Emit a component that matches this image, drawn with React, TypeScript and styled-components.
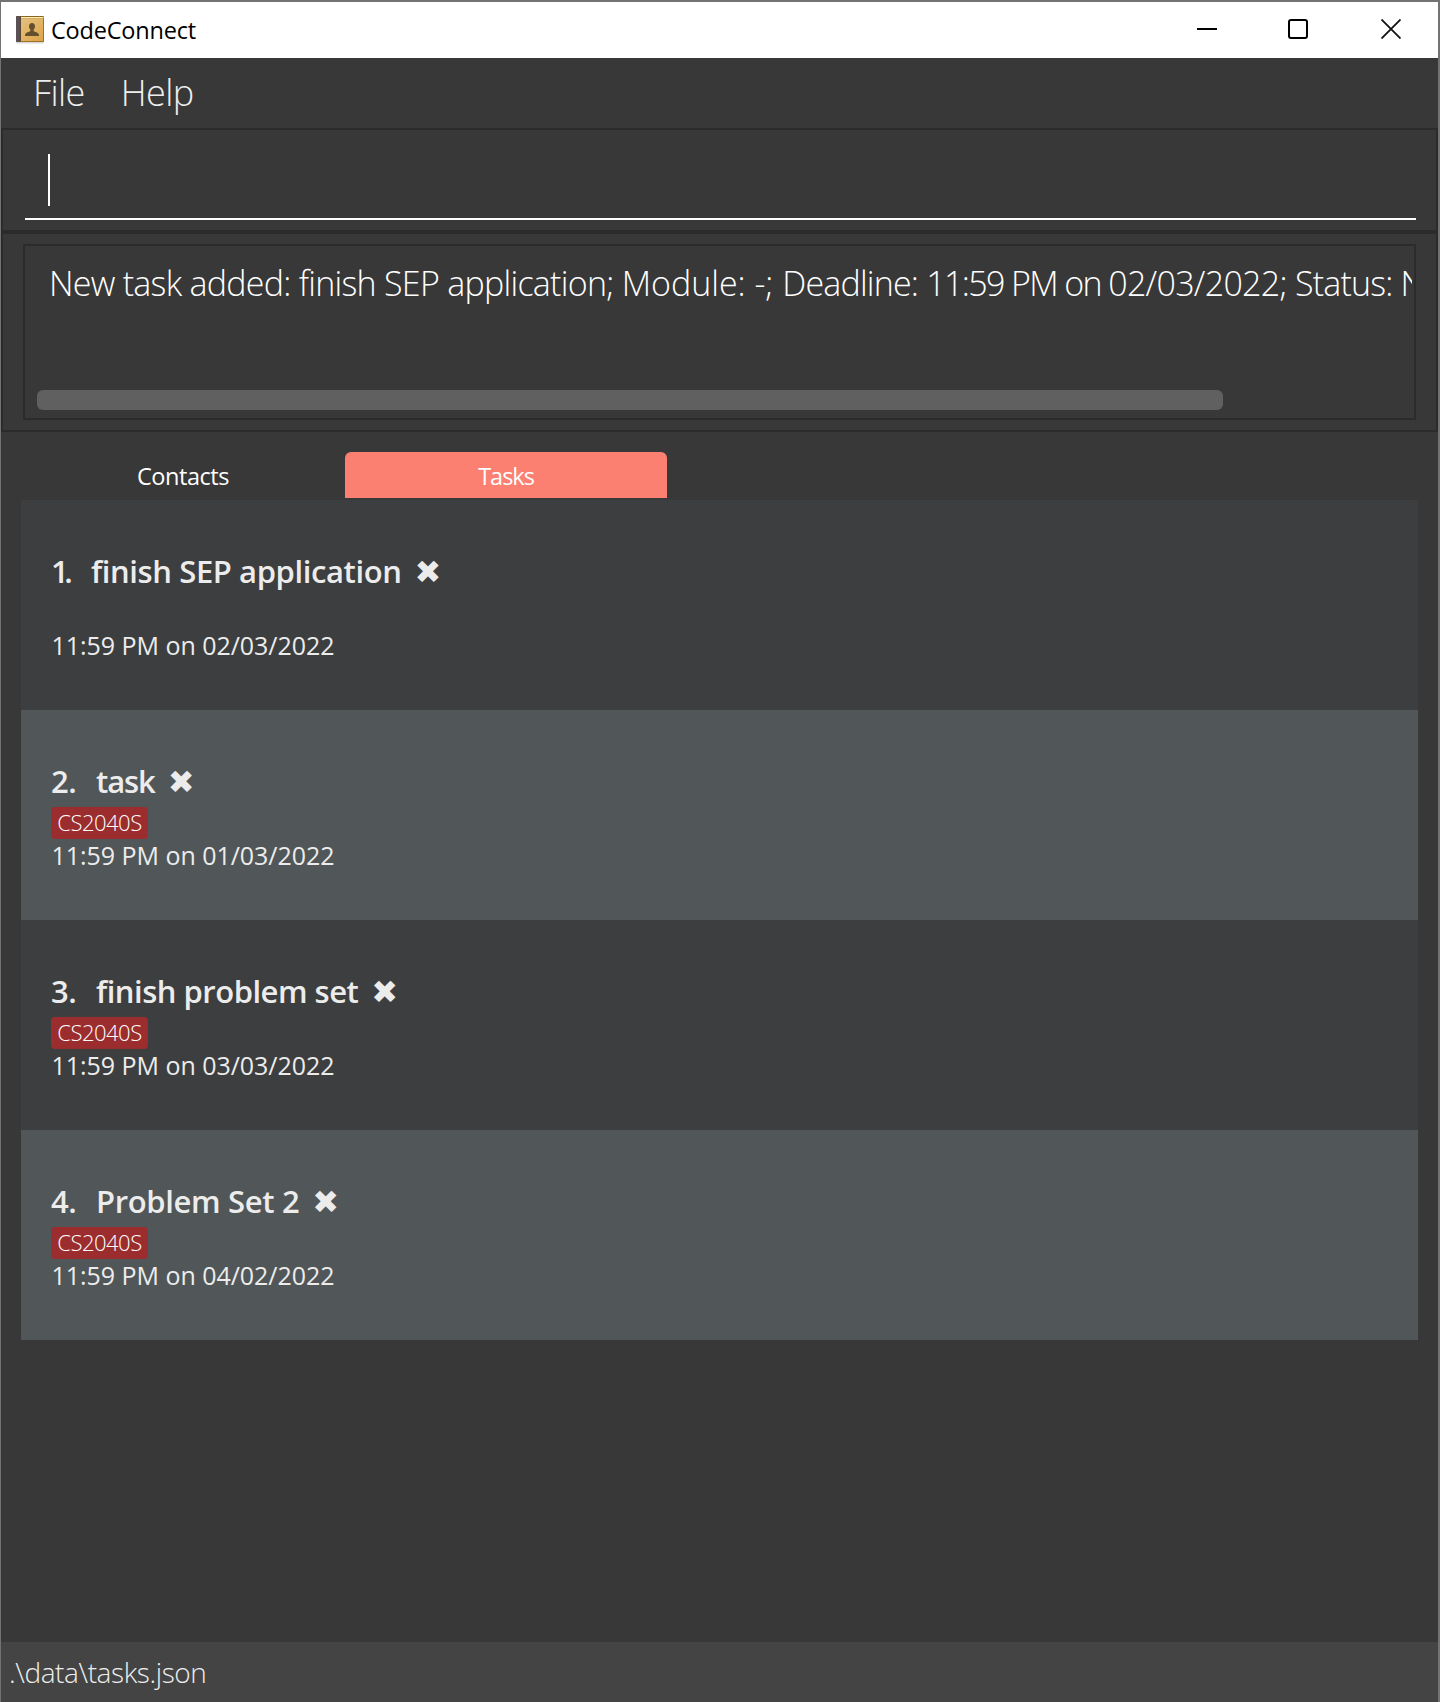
import React from "react";
import styled, { createGlobalStyle } from "styled-components";

const sans = '"Open Sans", "Noto Sans", sans-serif';

const GlobalStyle = createGlobalStyle`
  * { box-sizing: border-box; }
  body { margin: 0; background: #383838; font-family: ${sans}; }
`;

const Window = styled.div`
  display: flex;
  flex-direction: column;
  width: 1440px;
  height: 1702px;
  border-style: solid;
  border-color: #737373;
  border-width: 2px 2px 0 1px;
  background: #383838;
  overflow: hidden;
`;

const TitleBar = styled.header`
  display: flex;
  align-items: center;
  flex: none;
  height: 56px;
  padding: 0 37px 0 14px;
  background: #fff;
`;

const AppName = styled.span`
  flex: 1;
  margin-left: 6px;
  padding-bottom: 1px;
  font-size: 23.5px;
  letter-spacing: -0.2px;
  line-height: 32px;
  color: #000;
`;

const WindowControls = styled.div`
  display: flex;
  align-items: center;
  gap: 71px;
  padding-bottom: 2px;

  svg {
    display: block;
  }

  svg:last-child {
    margin-left: 2px;
  }
`;

const MenuBar = styled.nav`
  display: flex;
  align-items: center;
  flex: none;
  height: 70px;
  padding: 0 0 0 32px;
  gap: 36px;
`;

const MenuItem = styled.span`
  font-size: 36px;
  font-weight: 300;
  letter-spacing: -0.6px;
  line-height: 50px;
  color: #eee;
`;

const Panel = styled.section<{ $height: number }>`
  flex: none;
  height: ${(p) => p.$height}px;
  border: 2px solid #2b2b2b;
`;

const CommandPanel = styled(Panel)`
  padding: 0 20px 0 22px;
`;

const CommandField = styled.div`
  height: 90px;
  padding: 24px 0 0 23px;
  border-bottom: 2px solid #fff;
`;

const Caret = styled.div`
  width: 2px;
  height: 52px;
  background: #fff;
`;

const ResultPanel = styled(Panel)`
  padding: 10px 20px;
`;

const ResultBox = styled.div`
  display: flex;
  flex-direction: column;
  justify-content: space-between;
  height: 176px;
  padding: 14px 2px 8px 12px;
  border: 2px solid #2b2b2b;
`;

const ResultText = styled.div`
  margin-left: 12px;
  font-size: 34px;
  font-weight: 300;
  line-height: 46px;
  white-space: pre;
  overflow: hidden;
  color: #fff;
`;

const Tracked = styled.span<{ $tracking: number }>`
  letter-spacing: ${(p) => p.$tracking}px;
`;

const ScrollThumb = styled.div`
  width: 1186px;
  height: 20px;
  border-radius: 6px;
  background: #606060;
`;

const Tabs = styled.div`
  display: flex;
  flex: none;
  gap: 1px;
  padding: 20px 0 2px 21px;
`;

const Tab = styled.div<{ $active?: boolean; $tracking: number }>`
  width: 322px;
  height: 46px;
  padding-top: 2px;
  border-radius: 6px 6px 0 0;
  background: ${(p) => (p.$active ? "#fb8072" : "transparent")};
  font-size: 23.5px;
  letter-spacing: ${(p) => p.$tracking}px;
  line-height: 44px;
  text-align: center;
  color: #fff;
`;

const TaskList = styled.ul`
  flex: 1;
  margin: 0;
  padding: 0 20px;
  list-style: none;
`;

const TaskCard = styled.li<{ $alt: boolean }>`
  height: 210px;
  padding: 50px 30px 0;
  background: ${(p) => (p.$alt ? "#515658" : "#3c3e3f")};
  color: #ececec;
`;

const TaskHeading = styled.div`
  display: flex;
  align-items: center;
  height: 42px;
  font-size: 31px;
  font-weight: 600;
  line-height: 42px;
`;

const TaskIndex = styled(Tracked)<{ $width: number }>`
  width: ${(p) => p.$width}px;
`;

const StatusMark = styled.span`
  margin-left: 13px;
  padding-top: 1px;
  font-family: "DejaVu Sans", sans-serif;
  font-size: 32px;
  font-weight: 400;
`;

const ModuleSlot = styled.div`
  height: 36px;
  padding-top: 5px;
`;

const ModuleTag = styled.span`
  display: block;
  width: 97px;
  height: 32px;
  border-radius: 4px;
  background: #9b2d2f;
  font-size: 22px;
  font-weight: 350;
  letter-spacing: -0.5px;
  line-height: 30px;
  text-align: center;
  color: #fff;
`;

const Deadline = styled.div`
  padding-left: 0.5px;
  font-size: 25px;
  letter-spacing: -0.04px;
  line-height: 34px;
`;

const StatusBar = styled.footer`
  flex: none;
  height: 60px;
  padding-left: 8px;
  background: #444;
  font-size: 28px;
  font-weight: 300;
  letter-spacing: -0.4px;
  line-height: 60px;
  color: #eee;
`;

interface Task {
  name: string;
  module?: string;
  deadline: string;
  indexWidth: number;
  indexTracking: number;
  tracking: number;
}

const tasks: Task[] = [
  { name: "finish SEP application", deadline: "11:59 PM on 02/03/2022", indexWidth: 40, indexTracking: -4.5, tracking: -0.4 },
  { name: "task", module: "CS2040S", deadline: "11:59 PM on 01/03/2022", indexWidth: 45, indexTracking: -0.4, tracking: -1.1 },
  { name: "finish problem set", module: "CS2040S", deadline: "11:59 PM on 03/03/2022", indexWidth: 45, indexTracking: -0.4, tracking: -0.5 },
  { name: "Problem Set 2", module: "CS2040S", deadline: "11:59 PM on 04/02/2022", indexWidth: 45, indexTracking: -0.4, tracking: -0.34 },
];

const message: { text: string; tracking: number }[] = [
  { text: "New task added: finish SEP application; ", tracking: -0.73 },
  { text: "Module: -; ", tracking: -0.02 },
  { text: "Deadline: ", tracking: -0.81 },
  { text: "11:59 PM on ", tracking: -1.62 },
  { text: "02/03/2022; ", tracking: -0.72 },
  { text: "Status: N", tracking: -0.81 },
];

function BookIcon() {
  return (
    <svg width="30" height="28" viewBox="0 0 30 28">
      <defs>
        <linearGradient id="cover" x1="0" y1="0" x2="1" y2="1">
          <stop offset="0" stopColor="#e2bf80" />
          <stop offset="0.5" stopColor="#e3b466" />
          <stop offset="1" stopColor="#dca445" />
        </linearGradient>
      </defs>
      <rect x="1" y="25.5" width="28" height="2" rx="1" fill="#d8d8d8" />
      <rect x="1" y="0" width="28" height="26" rx="1" fill="#8f6418" />
      <rect x="5" y="1" width="23.4" height="1.4" fill="#fff0b8" />
      <rect x="5" y="2.4" width="23.2" height="22.8" fill="url(#cover)" />
      <path d="M2 0H5V26H2A1 1 0 0 1 1 25V1A1 1 0 0 1 2 0Z" fill="#5b5152" />
      <path d="M5.4 0.5V25.5" stroke="#463a35" />
      <path
        d="M17 7c1.9 0 3 1.3 3 3.2 0 1.6-.6 2.7-1.4 3.500v1.200c.5.9 5.200 1 5.400 4.300V20H10v-.8c.2-3.300 4.900-3.400 5.400-4.300v-1.200C14.600 12.900 14 11.800 14 10.200 14 8.300 15.100 7 17 7Z"
        fill="#62502f"
      />
    </svg>
  );
}

export default function App() {
  return (
    <>
      <GlobalStyle />
      <Window>
        <TitleBar>
          <BookIcon />
          <AppName>CodeConnect</AppName>
          <WindowControls>
            <svg width="20" height="20" viewBox="0 0 20 20">
              <path d="M0 10H20" stroke="#000" strokeWidth="2" />
            </svg>
            <svg width="20" height="20" viewBox="0 0 20 20" fill="none">
              <rect x="1" y="1" width="18" height="18" rx="2" stroke="#000" strokeWidth="2" />
            </svg>
            <svg width="20" height="20" viewBox="0 0 20 20">
              <path d="M.5.5l19 19M19.5.5l-19 19" stroke="#111" strokeWidth="1.8" />
            </svg>
          </WindowControls>
        </TitleBar>
        <MenuBar>
          <MenuItem>File</MenuItem>
          <MenuItem>Help</MenuItem>
        </MenuBar>
        <CommandPanel $height={104}>
          <CommandField>
            <Caret />
          </CommandField>
        </CommandPanel>
        <ResultPanel $height={200}>
          <ResultBox>
            <ResultText>
              {message.map((part) => (
                <Tracked key={part.text} $tracking={part.tracking}>
                  {part.text}
                </Tracked>
              ))}
            </ResultText>
            <ScrollThumb />
          </ResultBox>
        </ResultPanel>
        <Tabs>
          <Tab $tracking={-0.45}>Contacts</Tab>
          <Tab $active $tracking={-1}>
            Tasks
          </Tab>
        </Tabs>
        <TaskList>
          {tasks.map((task, i) => (
            <TaskCard key={task.name} $alt={i % 2 === 1}>
              <TaskHeading>
                <TaskIndex $width={task.indexWidth} $tracking={task.indexTracking}>
                  {i + 1}.
                </TaskIndex>
                <Tracked $tracking={task.tracking}>{task.name}</Tracked>
                <StatusMark>✖</StatusMark>
              </TaskHeading>
              <ModuleSlot>{task.module && <ModuleTag>{task.module}</ModuleTag>}</ModuleSlot>
              <Deadline>{task.deadline}</Deadline>
            </TaskCard>
          ))}
        </TaskList>
        <StatusBar>.\data\tasks.json</StatusBar>
      </Window>
    </>
  );
}
